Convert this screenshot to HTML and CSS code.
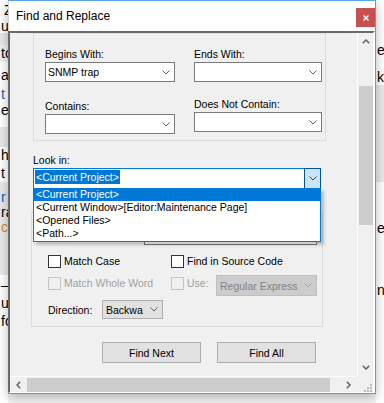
FILE: index.html
```html
<!DOCTYPE html>
<html lang="en">
<head>
    <meta charset="UTF-8">
    <meta name="viewport" content="width=device-width, initial-scale=1.0">
    <title>Find and Replace</title>
    <link rel="stylesheet" href="styles.css">
</head>
<body>
<div class="desktop">

    <!-- Editor behind the dialog (left edge) -->
    <div class="editor-edge">
        <div class="h18 pt2 indent">Z</div>
        <div class="h15">ul</div>
        <div class="h12 band"></div>
        <div class="h17 soft">to</div>
        <div class="h22 pt5">a</div>
        <div class="h18 pt2 link">t</div>
        <div class="h25">e</div>
        <div class="h20 band"></div>
        <div class="h18">he</div>
        <div class="h17">t</div>
        <div class="h93 band tight pt8"><span class="link">r</span><br>ra<br><span class="warn">c:</span></div>
        <div class="h128 loose pt1">&ndash;<br>ut<br>fo</div>
    </div>

    <!-- Dialog -->
    <div class="dialog">
        <div class="titlebar">
            <span class="title">Find and Replace</span>
            <button class="close-btn" aria-label="Close">
                <svg width="6" height="6" viewBox="0 0 6 6"><path d="M0.5 0.5 L5.5 5.5 M5.5 0.5 L0.5 5.5" stroke="#fff" stroke-width="1.4"/></svg>
            </button>
        </div>

        <div class="client">
            <div class="viewport">

                <!-- Filter fields -->
                <div class="group filters">
                    <div class="field-col">
                        <label class="field-label">Begins With:</label>
                        <div class="combo">
                            <span>SNMP trap</span>
                            <span class="combo-arrow"><svg width="8" height="5" viewBox="0 0 8 5"><polyline points="0.5,0.5 4,4 7.5,0.5" fill="none" stroke="#606060"/></svg></span>
                        </div>
                        <label class="field-label second">Contains:</label>
                        <div class="combo">
                            <span></span>
                            <span class="combo-arrow"><svg width="8" height="5" viewBox="0 0 8 5"><polyline points="0.5,0.5 4,4 7.5,0.5" fill="none" stroke="#606060"/></svg></span>
                        </div>
                    </div>
                    <div class="field-col right">
                        <label class="field-label">Ends With:</label>
                        <div class="combo">
                            <span></span>
                            <span class="combo-arrow"><svg width="8" height="5" viewBox="0 0 8 5"><polyline points="0.5,0.5 4,4 7.5,0.5" fill="none" stroke="#606060"/></svg></span>
                        </div>
                        <label class="field-label second">Does Not Contain:</label>
                        <div class="combo">
                            <span></span>
                            <span class="combo-arrow"><svg width="8" height="5" viewBox="0 0 8 5"><polyline points="0.5,0.5 4,4 7.5,0.5" fill="none" stroke="#606060"/></svg></span>
                        </div>
                    </div>
                </div>

                <!-- Look in (open dropdown) -->
                <div class="look-in">
                    <label class="field-label">Look in:</label>
                    <div class="combo focused">
                        <span class="selected-text">&lt;Current Project&gt;</span>
                        <span class="drop-btn"><svg width="8" height="5" viewBox="0 0 8 5"><polyline points="0.5,0.5 4,4 7.5,0.5" fill="none" stroke="#404040"/></svg></span>
                        <ul class="drop-list">
                            <li class="active">&lt;Current Project&gt;</li>
                            <li>&lt;Current Window&gt;[Editor:Maintenance Page]</li>
                            <li>&lt;Opened Files&gt;</li>
                            <li>&lt;Path...&gt;</li>
                        </ul>
                    </div>
                </div>

                <!-- Options -->
                <div class="group options">
                    <div class="path-box"></div>
                    <div class="check-row">
                        <label class="check"><span class="box"></span>Match Case</label>
                        <label class="check"><span class="box"></span>Find in Source Code</label>
                    </div>
                    <div class="check-row tall">
                        <label class="check disabled"><span class="box"></span>Match Whole Word</label>
                        <label class="check disabled use"><span class="box"></span>Use:</label>
                        <div class="combo disabled">
                            <span>Regular Express</span>
                            <span class="combo-arrow"><svg width="8" height="5" viewBox="0 0 8 5"><polyline points="0.5,0.5 4,4 7.5,0.5" fill="none" stroke="#a8a8a8"/></svg></span>
                        </div>
                    </div>
                    <div class="direction-row">
                        <span class="dir-label">Direction:</span>
                        <div class="combo plain">
                            <span>Backwa</span>
                            <span class="combo-arrow"><svg width="8" height="5" viewBox="0 0 8 5"><polyline points="0.5,0.5 4,4 7.5,0.5" fill="none" stroke="#606060"/></svg></span>
                        </div>
                    </div>
                </div>

                <div class="actions">
                    <button class="btn">Find Next</button>
                    <button class="btn">Find All</button>
                </div>
            </div>

            <!-- Scrollbars -->
            <div class="vscroll">
                <span class="scroll-arrow"><svg width="8" height="5" viewBox="0 0 8 5"><polyline points="0.8,4.2 4,1 7.2,4.2" fill="none" stroke="#606060" stroke-width="1.5"/></svg></span>
                <span class="vthumb"></span>
                <span class="scroll-arrow down"><svg width="8" height="5" viewBox="0 0 8 5"><polyline points="0.8,0.8 4,4 7.2,0.8" fill="none" stroke="#606060" stroke-width="1.5"/></svg></span>
            </div>
            <div class="hscroll">
                <span class="scroll-arrow"><svg width="5" height="8" viewBox="0 0 5 8"><polyline points="4.2,0.8 1,4 4.2,7.2" fill="none" stroke="#606060" stroke-width="1.5"/></svg></span>
                <span class="hthumb"></span>
                <span class="scroll-arrow next"><svg width="5" height="8" viewBox="0 0 5 8"><polyline points="0.8,0.8 4,4 0.8,7.2" fill="none" stroke="#606060" stroke-width="1.5"/></svg></span>
            </div>
            <div class="size-grip">
                <svg width="16" height="16" viewBox="0 0 16 16" fill="#bcbcbc">
                    <rect x="13" y="8" width="2" height="2"/>
                    <rect x="10" y="11" width="2" height="2"/><rect x="13" y="11" width="2" height="2"/>
                    <rect x="7" y="14" width="2" height="2"/><rect x="10" y="14" width="2" height="2"/><rect x="13" y="14" width="2" height="2"/>
                </svg>
            </div>
        </div>
    </div>

    <!-- Editor behind the dialog (right edge) -->
    <div class="editor-edge">
        <div class="h42"></div>
        <div class="h18">er</div>
        <div class="h25 pt9">k.</div>
        <div class="h97 band"></div>
        <div class="h38"></div>
        <div class="h18">er</div>
        <div class="h44"></div>
        <div class="h18">ne</div>
        <div class="h103"></div>
    </div>

</div>
</body>
</html>
```

FILE: styles.css
```css
/* Reset */
* {
    margin: 0;
    padding: 0;
    box-sizing: border-box;
}

body {
    font-family: "Liberation Sans", Arial, sans-serif;
    font-size: 10.5px;
    color: #000;
    background-color: #f3f3f3;
}

button {
    font: inherit;
    color: inherit;
}

.desktop {
    display: flex;
    align-items: flex-start;
    width: 384px;
    height: 403px;
    overflow: hidden;
}

/* Editor window behind the dialog */
.editor-edge {
    width: 8px;
    height: 403px;
    flex: none;
    overflow: hidden;
    background-color: #fff;
    font-size: 14px;
    line-height: 16px;
    white-space: nowrap;
}

.editor-edge div { padding-left: 1px; }
.editor-edge .indent { padding-left: 4px; }
.band { background-color: #e8e8e8; }
.soft { background-color: #f0f0f0; }
.link { color: #0066cc; }
.warn { color: #d08a2c; }
.tight { line-height: 15px; }
.loose { line-height: 18px; }

.pt1 { padding-top: 1px; }
.pt2 { padding-top: 2px; }
.pt5 { padding-top: 5px; }
.pt8 { padding-top: 8px; }
.pt9 { padding-top: 9px; }

.h12 { height: 12px; }
.h15 { height: 15px; }
.h17 { height: 17px; }
.h18 { height: 18px; }
.h20 { height: 20px; }
.h22 { height: 22px; }
.h25 { height: 25px; }
.h38 { height: 38px; }
.h42 { height: 42px; }
.h44 { height: 44px; }
.h93 { height: 93px; }
.h97 { height: 97px; }
.h103 { height: 103px; }
.h128 { height: 128px; }

/* Dialog window */
.dialog {
    position: relative;
    z-index: 1;
    flex: none;
    width: 368px;
    height: 394px;
    display: flex;
    flex-direction: column;
    background-color: #fff;
    border-top: 1px solid #5aa5e6;
    border-right: 1px solid #8f8f8f;
    border-bottom: 1px solid #8f8f8f;
    box-shadow: 0 3px 10px rgba(0, 0, 0, 0.28);
}

.titlebar {
    height: 30px;
    flex: none;
    display: flex;
    justify-content: space-between;
    align-items: flex-start;
    border-left: 1px solid #d4d4d4;
}

.title {
    padding: 8px 0 0 7px;
    font-size: 12px;
    line-height: 14px;
}

.close-btn {
    width: 19px;
    height: 19px;
    margin-top: 7px;
    border: none;
    background-color: #c75050;
    display: flex;
    align-items: center;
    justify-content: center;
}

/* Scrollable client area */
.client {
    flex: 1;
    display: grid;
    grid-template-columns: 347px 16px;
    grid-template-rows: 343px 16px;
    background-color: #f0f0f0;
    border-top: 2px solid #6a6a6a;
    border-left: 2px solid #6a6a6a;
    border-right: 2px solid #fff;
    border-bottom: 1px solid #fff;
}

.viewport {
    overflow: hidden;
}

.group {
    border: 1px solid #dcdcdc;
}

.filters {
    width: 293px;
    height: 108px;
    margin-left: 23px;
    padding: 14px 0 0 11px;
    display: flex;
    gap: 19px;
}

.field-col {
    width: 130px;
    display: flex;
    flex-direction: column;
}

.field-col.right {
    width: 128px;
}

.field-label {
    display: block;
    height: 13px;
    line-height: 13px;
}

.field-label.second {
    margin-top: 18px;
}

.field-col.right .field-label.second {
    margin-top: 16px;
}

/* Combo boxes */
.combo {
    position: relative;
    height: 20px;
    margin-top: 1px;
    display: flex;
    align-items: center;
    justify-content: space-between;
    padding-left: 2px;
    background-color: #fff;
    border: 1px solid #7a7a7a;
    white-space: nowrap;
}

.combo-arrow {
    flex: none;
    width: 17px;
    height: 100%;
    display: flex;
    align-items: center;
    justify-content: center;
}

.look-in {
    width: 288px;
    margin: 13px 0 0 23px;
}

.combo.focused {
    height: 21px;
    align-items: flex-start;
    padding-left: 1px;
    border-color: #0078d7;
}

.selected-text {
    margin-top: 1px;
    padding: 0 1px;
    line-height: 14px;
    background-color: #0078d7;
    color: #fff;
}

.drop-btn {
    flex: none;
    width: 17px;
    height: 21px;
    margin: -1px -1px 0 0;
    display: flex;
    align-items: center;
    justify-content: center;
    background-color: #cce4f7;
    border: 1px solid #005499;
}

.drop-list {
    position: absolute;
    top: 100%;
    left: -1px;
    right: -1px;
    z-index: 2;
    list-style: none;
    padding-bottom: 1px;
    background-color: #fff;
    border: 1px solid #0078d7;
    border-top: none;
    box-shadow: 3px 3px 3px rgba(0, 0, 0, 0.22);
}

.drop-list li {
    height: 13px;
    line-height: 13px;
    padding-left: 2px;
    white-space: nowrap;
}

.drop-list li.active {
    background-color: #0078d7;
    color: #fff;
}

/* Options group */
.options {
    width: 292px;
    height: 115px;
    margin: 23px 0 0 21px;
    padding: 12px 0 0 16px;
}

.path-box {
    width: 173px;
    height: 20px;
    margin-left: 96px;
    background-color: #fff;
    border: 1px solid #7a7a7a;
}

.check-row {
    display: flex;
    align-items: flex-start;
    margin-top: 10px;
}

.check-row.tall {
    height: 21px;
    margin-top: 7px;
}

.check {
    width: 123px;
    display: flex;
    align-items: center;
    gap: 3px;
    line-height: 13px;
    white-space: nowrap;
}

.tall .check {
    margin-top: 2px;
}

.check.use {
    width: 45px;
}

.box {
    flex: none;
    width: 13px;
    height: 13px;
    background-color: #fff;
    border: 1px solid #333;
}

.check.disabled {
    color: #a0a0a0;
}

.check.disabled .box {
    background-color: #f0f0f0;
    border-color: #c4c4c4;
}

.combo.disabled {
    width: 101px;
    height: 21px;
    margin-top: 0;
    padding-left: 3px;
    background-color: #ccc;
    border-color: #bfbfbf;
    color: #838383;
}

.direction-row {
    display: flex;
    align-items: center;
    margin-top: 4px;
}

.dir-label {
    width: 54px;
}

.combo.plain {
    width: 61px;
    height: 19px;
    margin-top: 0;
    padding-left: 3px;
    background-color: #e1e1e1;
    border-color: #adadad;
}

/* Buttons */
.actions {
    display: flex;
    gap: 16px;
    margin: 15px 0 0 92px;
}

.btn {
    width: 99px;
    height: 21px;
    background-color: #e1e1e1;
    border: 1px solid #adadad;
}

/* Scrollbars */
.vscroll {
    display: flex;
    flex-direction: column;
    border-left: 1px solid #fff;
}

.scroll-arrow {
    flex: none;
    height: 17px;
    display: flex;
    align-items: center;
    justify-content: center;
}

.vthumb {
    height: 139px;
    margin: 36px 0 0 1px;
    background-color: #cdcdcd;
}

.scroll-arrow.down {
    margin-top: auto;
}

.hscroll {
    display: flex;
    border-top: 1px solid #fff;
}

.hscroll .scroll-arrow {
    width: 17px;
    height: auto;
}

.hthumb {
    width: 303px;
    margin-top: 1px;
    background-color: #cdcdcd;
}

.scroll-arrow.next {
    margin-left: auto;
}

.size-grip {
    display: flex;
}
```
